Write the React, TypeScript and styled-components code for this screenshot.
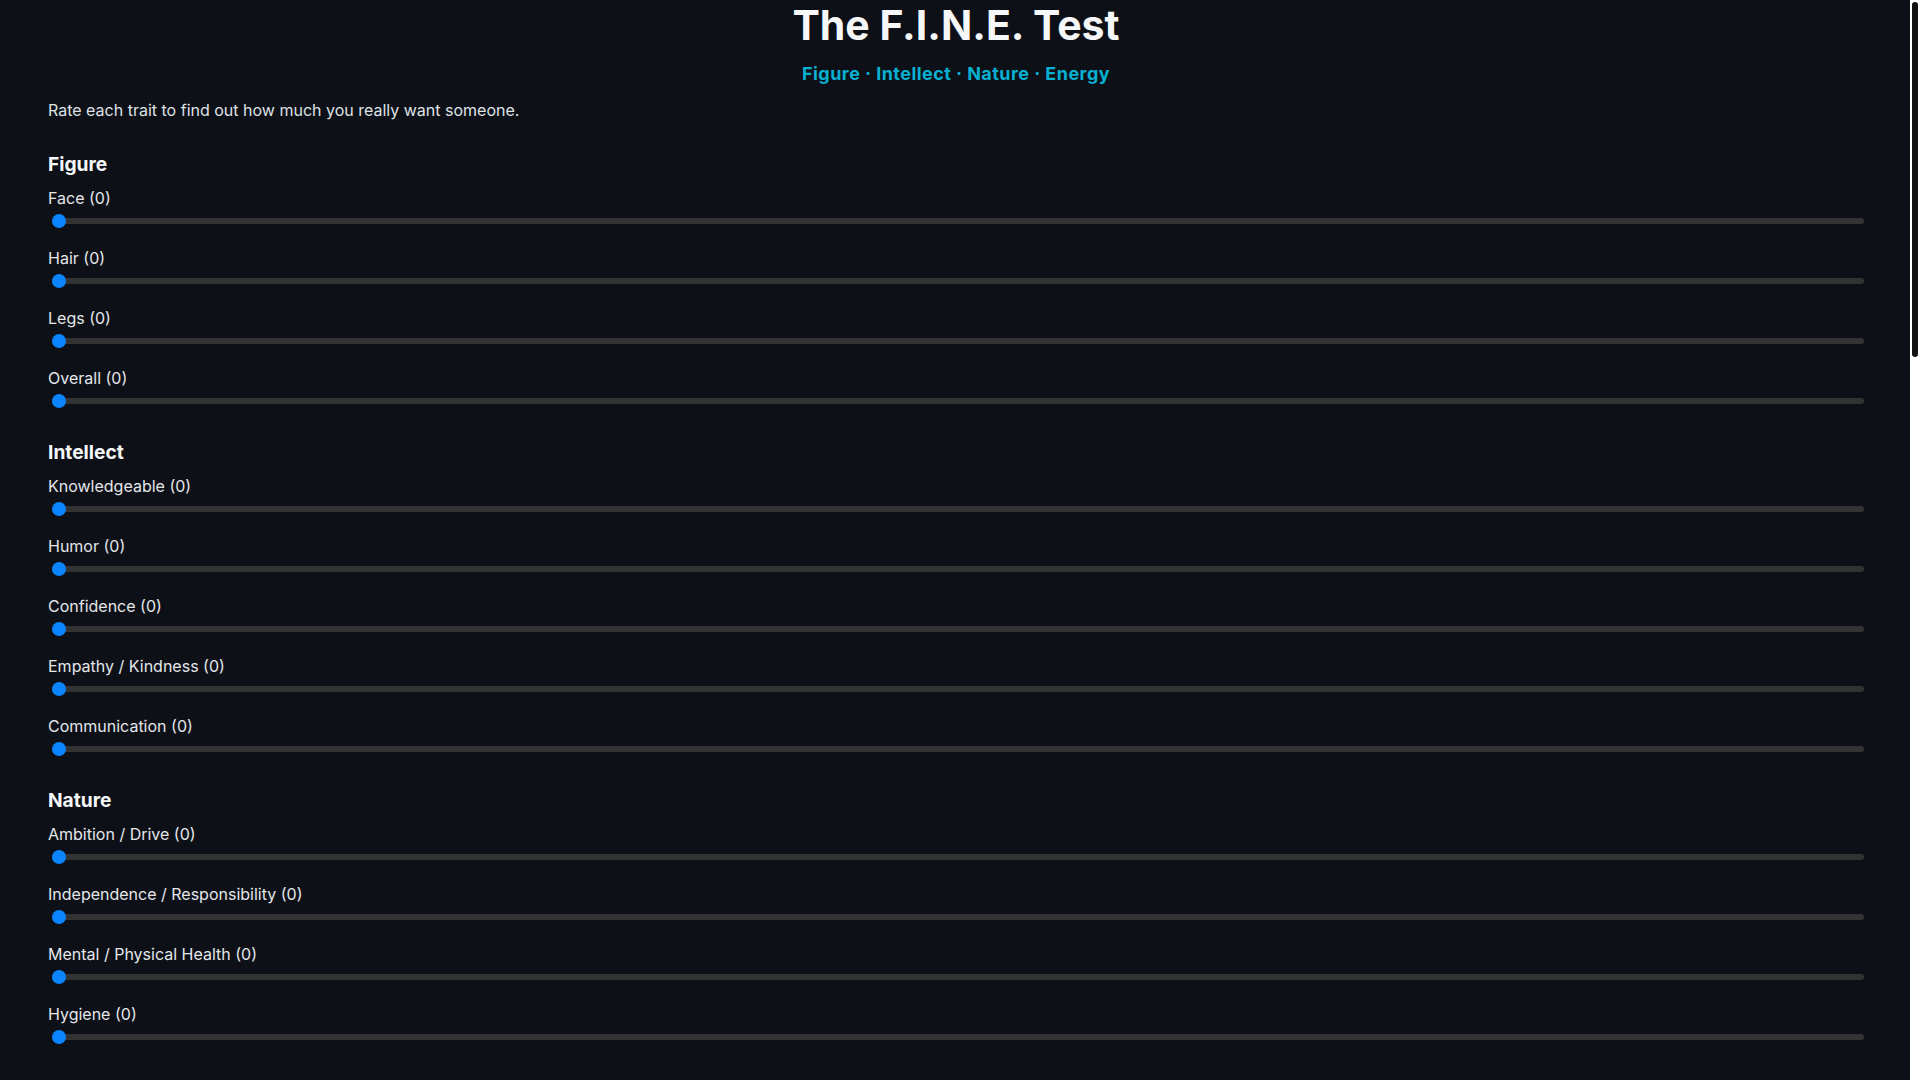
import React, { useLayoutEffect, useRef, useState } from 'react';
import styled, { createGlobalStyle } from 'styled-components';

const GlobalStyle = createGlobalStyle`
  html, body {
    margin: 0;
    padding: 0;
    height: 100%;
    overflow: hidden;
    background: #0d1117;
  }

  body {
    color: #e6e6e6;
    font-family: Inter, 'Noto Sans', 'Liberation Sans', sans-serif;
  }
`;

const Shell = styled.div`
  display: flex;
  height: 100vh;
`;

const Viewport = styled.div`
  flex: 1;
  min-width: 0;
  overflow-y: auto;
  background: #0d1117;
  scrollbar-width: none;

  &::-webkit-scrollbar {
    display: none;
  }
`;

const Rail = styled.div`
  position: relative;
  flex: 0 0 10px;
  background: #ffffff;
`;

const RailThumb = styled.div`
  position: absolute;
  left: 2px;
  width: 6px;
  border-radius: 3px;
  background: #121212;
`;

const Page = styled.main`
  padding: 1px 46px 131px 48px;
`;

const Header = styled.header`
  text-align: center;
`;

const Title = styled.h1`
  margin: 0;
  font-size: 41px;
  line-height: 48px;
  font-weight: 700;
  color: #f6f7f9;
`;

const Tagline = styled.div`
  margin-top: 13px;
  font-size: 18px;
  line-height: 24px;
  font-weight: 700;
  letter-spacing: 0.45px;
  color: #08b0d2;
`;

const Intro = styled.p`
  margin: 12px 0 0;
  font-size: 16px;
  line-height: 24px;
  color: #dfe2e6;
`;

const Section = styled.section`
  margin-top: 30px;

  & + & {
    margin-top: 36px;
  }
`;

const SectionTitle = styled.h2`
  margin: 0 0 10px;
  font-size: 19.2px;
  line-height: 24px;
  font-weight: 700;
  color: #f6f7f9;
`;

const Traits = styled.div`
  display: flex;
  flex-direction: column;
  gap: 22px;
`;

const Trait = styled.div`
  display: flex;
  flex-direction: column;
  gap: 8px;
`;

const TraitLabel = styled.label`
  font-size: 16px;
  line-height: 24px;
  color: #e4e6ea;
`;

const Slider = styled.input`
  -webkit-appearance: none;
  appearance: none;
  display: block;
  width: calc(100% - 4px);
  height: 6px;
  margin: 0 0 0 4px;
  background: #333333;
  border-radius: 3px;
  outline: none;
  cursor: pointer;

  &::-webkit-slider-thumb {
    -webkit-appearance: none;
    width: 14px;
    height: 14px;
    border: none;
    border-radius: 50%;
    background: #0a84ff;
  }
`;

const ResultCard = styled.div`
  margin-top: 48px;
  padding: 24px;
  border: 1px solid #30363d;
  border-radius: 10px;
  background: #161b22;
`;

const Score = styled.div`
  font-size: 40px;
  font-weight: 700;
  color: #08b0d2;
`;

const Guide = styled.ul`
  margin: 16px 0 0;
  padding-left: 20px;
  line-height: 28px;
  color: #c9d1d9;
  min-height: 1530px;
`;

type Category = {
  name: string;
  traits: string[];
};

const CATEGORIES: Category[] = [
  { name: 'Figure', traits: ['Face', 'Hair', 'Legs', 'Overall'] },
  {
    name: 'Intellect',
    traits: ['Knowledgeable', 'Humor', 'Confidence', 'Empathy / Kindness', 'Communication'],
  },
  {
    name: 'Nature',
    traits: [
      'Ambition / Drive',
      'Independence / Responsibility',
      'Mental / Physical Health',
      'Hygiene',
    ],
  },
  {
    name: 'Energy',
    traits: ['Chemistry', 'Fun / Playfulness', 'Passion', 'Vibe', 'Attraction'],
  },
];

const App = () => {
  const [values, setValues] = useState<Record<string, number>>({});
  const [thumb, setThumb] = useState({ top: 2, height: 355 });
  const viewRef = useRef<HTMLDivElement>(null);

  // custom scroll rail: thumb size and offset come from the scroll box
  useLayoutEffect(() => {
    const el = viewRef.current;
    if (!el) return;
    const update = () => {
      const ratio = el.clientHeight / el.scrollHeight;
      const height = Math.max(ratio * el.clientHeight, 20);
      const top = (el.scrollTop / el.scrollHeight) * el.clientHeight;
      setThumb({ top: top + 2, height: height - 4 });
    };
    update();
    el.addEventListener('scroll', update);
    window.addEventListener('resize', update);
    return () => {
      el.removeEventListener('scroll', update);
      window.removeEventListener('resize', update);
    };
  }, []);

  const setValue = (key: string, value: number) =>
    setValues((prev) => ({ ...prev, [key]: value }));

  const total = Object.values(values).reduce((sum, v) => sum + v, 0);

  return (
    <>
      <GlobalStyle />
      <Shell>
        <Viewport ref={viewRef}>
          <Page>
            <Header>
              <Title>The F.I.N.E. Test</Title>
              <Tagline>Figure · Intellect · Nature · Energy</Tagline>
            </Header>
            <Intro>Rate each trait to find out how much you really want someone.</Intro>

            {CATEGORIES.map((category) => (
              <Section key={category.name}>
                <SectionTitle>{category.name}</SectionTitle>
                <Traits>
                  {category.traits.map((trait) => {
                    const key = `${category.name}-${trait}`;
                    const value = values[key] ?? 0;
                    return (
                      <Trait key={key}>
                        <TraitLabel htmlFor={key}>
                          {trait} ({value})
                        </TraitLabel>
                        <Slider
                          id={key}
                          type="range"
                          min={0}
                          max={10}
                          value={value}
                          onChange={(e) => setValue(key, Number(e.target.value))}
                        />
                      </Trait>
                    );
                  })}
                </Traits>
              </Section>
            ))}

            <ResultCard>
              <SectionTitle>Your Score</SectionTitle>
              <Score>{total} / 180</Score>
              <Guide>
                <li>0 – 45: Not really feeling it.</li>
                <li>46 – 90: Could be a friend.</li>
                <li>91 – 135: There is something there.</li>
                <li>136 – 180: You really want them.</li>
              </Guide>
            </ResultCard>
          </Page>
        </Viewport>
        <Rail>
          <RailThumb style={{ top: thumb.top, height: thumb.height }} />
        </Rail>
      </Shell>
    </>
  );
};

export default App;
